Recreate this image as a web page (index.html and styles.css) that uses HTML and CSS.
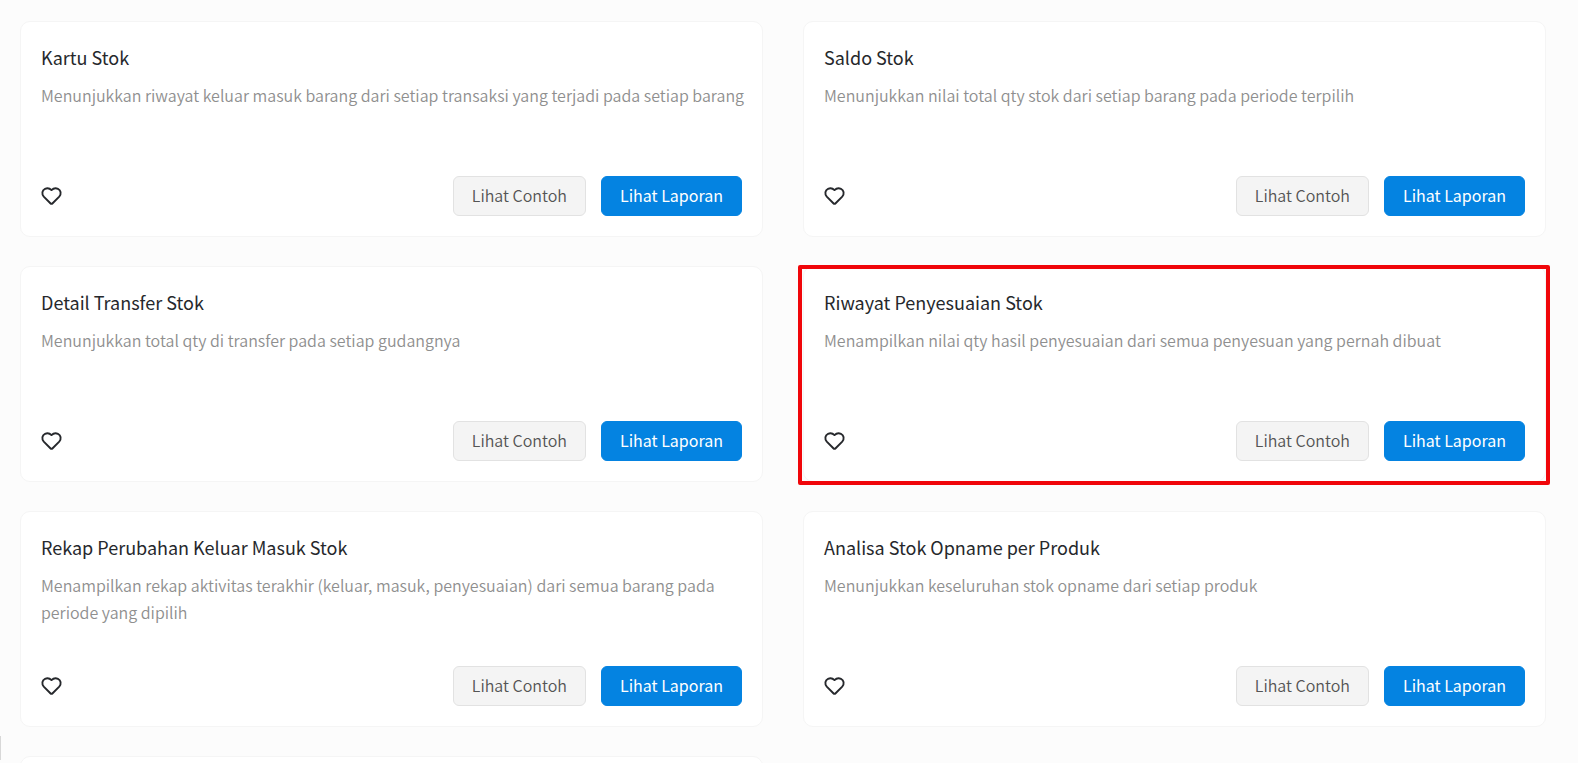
FILE: index.html
```html
<!DOCTYPE html>
<html lang="id">
<head>
<meta charset="utf-8">
<meta name="viewport" content="width=device-width, initial-scale=1">
<title>Laporan Stok</title>
<link rel="stylesheet" href="styles.css">
</head>
<body>
<svg class="sprite" aria-hidden="true">
  <symbol id="heart" viewBox="0 0 22 22">
    <path d="M11 4.300C9.300 2.500 6.500 1.900 4.200 2.900C1.100 4.300 .5 8.500 2.900 11.200L9.800 18.100C10.500 18.800 11.500 18.800 12.200 18.100L19.100 11.200C21.500 8.500 20.900 4.300 17.800 2.900C15.500 1.900 12.700 2.500 11 4.300Z"/>
  </symbol>
</svg>
<main class="reports">
  <article class="card">
    <h2 class="card-title">Kartu Stok</h2>
    <p class="card-text">Menunjukkan riwayat keluar masuk barang dari setiap transaksi yang terjadi pada setiap barang</p>
    <div class="card-footer">
      <button class="favorite" type="button" aria-label="Favorit"><svg class="heart"><use href="#heart"/></svg></button>
      <button class="button" type="button">Lihat Contoh</button>
      <button class="button button-primary" type="button">Lihat Laporan</button>
    </div>
  </article>
  <article class="card">
    <h2 class="card-title">Saldo Stok</h2>
    <p class="card-text">Menunjukkan nilai total qty stok dari setiap barang pada periode terpilih</p>
    <div class="card-footer">
      <button class="favorite" type="button" aria-label="Favorit"><svg class="heart"><use href="#heart"/></svg></button>
      <button class="button" type="button">Lihat Contoh</button>
      <button class="button button-primary" type="button">Lihat Laporan</button>
    </div>
  </article>
  <article class="card">
    <h2 class="card-title">Detail Transfer Stok</h2>
    <p class="card-text">Menunjukkan total qty di transfer pada setiap gudangnya</p>
    <div class="card-footer">
      <button class="favorite" type="button" aria-label="Favorit"><svg class="heart"><use href="#heart"/></svg></button>
      <button class="button" type="button">Lihat Contoh</button>
      <button class="button button-primary" type="button">Lihat Laporan</button>
    </div>
  </article>
  <article class="card card-marked">
    <h2 class="card-title">Riwayat Penyesuaian Stok</h2>
    <p class="card-text">Menampilkan nilai qty hasil penyesuaian dari semua penyesuan yang pernah dibuat</p>
    <div class="card-footer">
      <button class="favorite" type="button" aria-label="Favorit"><svg class="heart"><use href="#heart"/></svg></button>
      <button class="button" type="button">Lihat Contoh</button>
      <button class="button button-primary" type="button">Lihat Laporan</button>
    </div>
  </article>
  <article class="card">
    <h2 class="card-title">Rekap Perubahan Keluar Masuk Stok</h2>
    <p class="card-text">Menampilkan rekap aktivitas terakhir (keluar, masuk, penyesuaian) dari semua barang pada periode yang dipilih</p>
    <div class="card-footer">
      <button class="favorite" type="button" aria-label="Favorit"><svg class="heart"><use href="#heart"/></svg></button>
      <button class="button" type="button">Lihat Contoh</button>
      <button class="button button-primary" type="button">Lihat Laporan</button>
    </div>
  </article>
  <article class="card">
    <h2 class="card-title">Analisa Stok Opname per Produk</h2>
    <p class="card-text">Menunjukkan keseluruhan stok opname dari setiap produk</p>
    <div class="card-footer">
      <button class="favorite" type="button" aria-label="Favorit"><svg class="heart"><use href="#heart"/></svg></button>
      <button class="button" type="button">Lihat Contoh</button>
      <button class="button button-primary" type="button">Lihat Laporan</button>
    </div>
  </article>
  <article class="card"></article>
</main>
<div class="edge-handle"></div>
</body>
</html>
```
FILE: styles.css
```css
* {
  box-sizing: border-box;
}

body {
  margin: 0;
  height: 100vh;
  overflow: hidden;
  background: #fcfcfc;
  color: #26282c;
  font-family: "Noto Sans CJK SC", "Noto Sans", sans-serif;
  font-size: 16px;
}

.sprite {
  display: none;
}

.reports {
  display: grid;
  grid-template-columns: repeat(2, minmax(0, 1fr));
  gap: 29px 40px;
  padding: 21px 32px 0 20px;
}

.card {
  position: relative;
  display: flex;
  flex-direction: column;
  min-height: 216px;
  padding: 20px 12px 20px 20px;
  border: 1px solid #f5f5f5;
  border-radius: 10px;
  background: #fff;
}

.card-marked::after {
  content: "";
  position: absolute;
  inset: -2px -5px -4px -6px;
  border: 4px solid #f0060a;
  border-radius: 2px;
  pointer-events: none;
}

.card-title {
  margin: 0;
  font-size: 18px;
  font-weight: 400;
  line-height: 30px;
}

.card-text {
  margin: 10px 0 0;
  color: #8f8f8f;
  font-weight: 350;
  line-height: 27px;
}

.card-footer {
  display: flex;
  align-items: center;
  gap: 15px;
  margin-top: auto;
  padding-right: 8px;
}

.favorite {
  display: flex;
  margin-right: auto;
  padding: 0;
  border: 0;
  background: none;
  color: #26282c;
}

.heart {
  width: 21px;
  height: 21px;
  fill: none;
  stroke: currentColor;
  stroke-width: 2;
  stroke-linejoin: round;
}

.button {
  height: 40px;
  padding: 0 18px 3px;
  border: 1px solid #e2e2e2;
  border-radius: 6px;
  background: #f4f4f4;
  color: #555;
  font: inherit;
  font-weight: 350;
}

.button-primary {
  border-color: #0483e1;
  background: #0483e1;
  color: #fff;
  font-weight: 400;
}

.edge-handle {
  position: absolute;
  bottom: 3px;
  left: 0;
  width: 1px;
  height: 24px;
  background: #d8d8d8;
}
```
